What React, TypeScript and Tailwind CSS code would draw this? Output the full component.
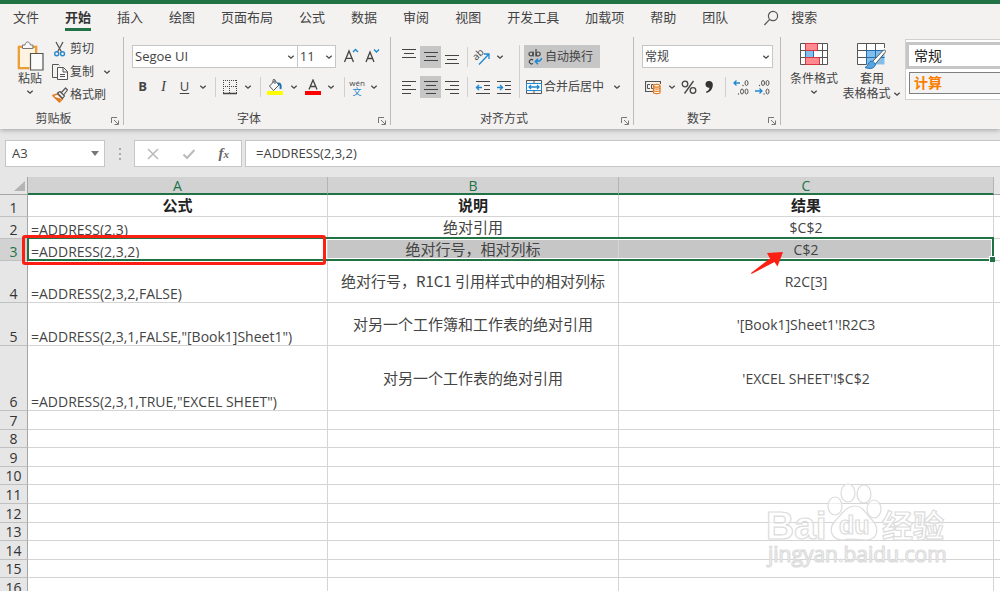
import type { ReactNode } from "react";
import clsx from "clsx";

const TABS = ["文件", "开始", "插入", "绘图", "页面布局", "公式", "数据", "审阅", "视图", "开发工具", "加载项", "帮助", "团队"];

type Row = { n: number; height: string; a?: string; b?: string; c?: string };

const ROWS: Row[] = [
  { n: 1, height: "h-[22px]", a: "公式", b: "说明", c: "结果" },
  { n: 2, height: "h-[22px]", a: "=ADDRESS(2,3)", b: "绝对引用", c: "$C$2" },
  { n: 3, height: "h-[22px]", a: "=ADDRESS(2,3,2)", b: "绝对行号，相对列标", c: "C$2" },
  { n: 4, height: "h-[42px]", a: "=ADDRESS(2,3,2,FALSE)", b: "绝对行号，R1C1 引用样式中的相对列标", c: "R2C[3]" },
  { n: 5, height: "h-[43px]", a: '=ADDRESS(2,3,1,FALSE,"[Book1]Sheet1")', b: "对另一个工作簿和工作表的绝对引用", c: "'[Book1]Sheet1'!R2C3" },
  { n: 6, height: "h-[65px]", a: '=ADDRESS(2,3,1,TRUE,"EXCEL SHEET")', b: "对另一个工作表的绝对引用", c: "'EXCEL SHEET'!$C$2" },
  { n: 7, height: "h-[19px]" },
  { n: 8, height: "h-[18px]" },
  { n: 9, height: "h-[19px]" },
  { n: 10, height: "h-[18px]" },
  { n: 11, height: "h-[19px]" },
  { n: 12, height: "h-[19px]" },
  { n: 13, height: "h-[18px]" },
  { n: 14, height: "h-[19px]" },
  { n: 15, height: "h-[18px]" },
  { n: 16, height: "h-[19px]" },
];

export default function App() {
  return (
    <div className="flex h-screen flex-col overflow-hidden bg-[#e6e6e6] font-['Open_Sans','Noto_Sans_CJK_SC',sans-serif] text-xs text-[#444]">
      <Ribbon />
      <FormulaBar />
      <Sheet />
    </div>
  );
}

function Ribbon() {
  return (
    <header className="shrink-0 border-t-4 border-[#217346] bg-[#f3f2f1] shadow-[0_1px_5px_rgba(0,0,0,0.3)]">
      <nav className="flex h-[33px] items-start text-[13px] whitespace-nowrap">
        {TABS.map((tab) => (
          <button key={tab} className="px-[13px]">
            <span
              className={clsx(
                "block h-[27px] border-b-[3px] pt-[3px] leading-5",
                tab === "开始" ? "border-[#217346] font-bold text-[#333]" : "border-transparent"
              )}
            >
              {tab}
            </span>
          </button>
        ))}
        <button className="flex h-[27px] items-center gap-3 pl-[22px]">
          <svg className="h-4 w-4" viewBox="0 0 16 16" fill="none" stroke="#555" strokeWidth="1.2">
            <circle cx="10" cy="6" r="4.6" />
            <path d="M6.7 9.4 1.4 15" />
          </svg>
          搜索
        </button>
      </nav>

      <div className="flex h-[92px] items-start">
        <ClipboardGroup />
        <FontGroup />
        <AlignGroup />
        <NumberGroup />
        <StylesGroup />
      </div>
    </header>
  );
}

function Group({ label, className, children }: { label: string; className: string; children: ReactNode }) {
  return (
    <section className={clsx("flex h-[88px] shrink-0 flex-col border-r border-[#bdbbb9]", className)}>
      <div className="flex-1">{children}</div>
      <div className="flex h-3 items-center leading-3">
        <span className="flex-1 text-center">{label}</span>
        <button aria-label={`${label}设置`} className="w-4 pl-1">
          <svg className="mt-1 h-2 w-2" viewBox="0 0 8 8" fill="none" stroke="#777">
            <path d="M.5 6V.5H6M3 3l4 4M7.5 3.5v4h-4" />
          </svg>
        </button>
      </div>
    </section>
  );
}

function Chevron() {
  return (
    <svg className="h-[10px] w-[10px] shrink-0" viewBox="0 0 10 10" fill="none" stroke="#444" strokeWidth="1.3">
      <path d="M2.3 3.8 5 6.2l2.7-2.4" />
    </svg>
  );
}

function Drop({ label }: { label: string }) {
  return (
    <button aria-label={label} className="flex h-[22px] w-[17px] items-center justify-center">
      <Chevron />
    </button>
  );
}

function Tool({ label, className, children }: { label: string; className?: string; children: ReactNode }) {
  return (
    <button aria-label={label} title={label} className={clsx("flex h-[22px] shrink-0 items-center justify-center", className)}>
      {children}
    </button>
  );
}

function Divider() {
  return (
    <span className="flex w-[9px] shrink-0 justify-center">
      <span className="h-5 w-px bg-[#d2d0ce]" />
    </span>
  );
}

function Dropdown({ label, value, className }: { label: string; value: string; className: string }) {
  return (
    <div className={clsx("grid h-[23px] items-center border border-[#c6c6c6] bg-white", className)}>
      <select aria-label={label} className="col-start-1 row-start-1 h-[21px] w-full appearance-none pl-[2px] outline-none">
        <option>{value}</option>
      </select>
      <span className="pointer-events-none col-start-1 row-start-1 mr-[1px] justify-self-end">
        <Chevron />
      </span>
    </div>
  );
}

function ClipboardGroup() {
  return (
    <Group label="剪贴板" className="w-[124px]">
      <div className="flex">
        <button className="flex w-[52px] flex-col items-center pt-1 pl-2">
          <svg className="h-[30px] w-7" viewBox="0 0 28 30" fill="none">
            <path d="M2 5h19v7h-2V7H4v19h9v2H2z" fill="#f0a63c" stroke="#e8912d" strokeWidth=".6" />
            <path d="M4 7h15v5h-5v14H4z" fill="#fdf3e0" />
            <path d="M6.5 7.5V4H9c.3-2 1.400-3 2.700-3s2.400 1 2.700 3h2.500v3.5z" fill="#fafafa" stroke="#777" />
            <path d="M14.5 12.5H27v16.5H14.5z" fill="#fafafa" stroke="#555" strokeWidth="1.2" />
          </svg>
          <span className="leading-4">粘贴</span>
          <Chevron />
        </button>
        <div className="flex flex-col">
          <button className="flex h-[23px] items-center gap-[2px]">
            <svg className="h-4 w-4" viewBox="0 0 16 16" fill="none">
              <path d="M4 1l5.5 10M11 1 5.5 11" stroke="#555" strokeWidth="1.3" />
              <circle cx="4.7" cy="12.700" r="2" stroke="#2b88c8" strokeWidth="1.4" />
              <circle cx="10.5" cy="12.700" r="2" stroke="#2b88c8" strokeWidth="1.4" />
            </svg>
            剪切
          </button>
          <div className="flex items-center gap-1">
            <button className="flex h-[23px] items-center gap-[2px]">
              <svg className="h-4 w-4" viewBox="0 0 16 16" fill="none" stroke="#555">
                <path d="M5 13.5H.5V.5h6l1 1" />
                <path d="M5.5 3.5h6l4 4v8h-10zM11 3.5v4.5h4.5M8 10.5h5M8 12.5h5" fill="#fafafa" />
              </svg>
              复制
            </button>
            <Drop label="复制选项" />
          </div>
          <button className="flex h-[23px] items-center gap-[2px]">
            <svg className="h-4 w-4" viewBox="0 0 16 16" fill="none" strokeLinejoin="round">
              <path d="M.8 8.5 5.5 7l5 5-3 3z" fill="#fff" stroke="#e07b1f" strokeWidth="1.4" />
              <path d="M3 10.500 8.500 12 7 14.500z" fill="#e07b1f" stroke="#e07b1f" />
              <path d="M5.500 6 8 4.500 12.500 9 10.500 11.500zM9.500 5.500 13.500 1l2 2L12 7.500" fill="#f5f5f5" stroke="#555" strokeWidth="1.2" />
            </svg>
            格式刷
          </button>
        </div>
      </div>
    </Group>
  );
}

function FontGroup() {
  return (
    <Group label="字体" className="w-[267px]">
      <div className="flex flex-col gap-2 px-2 pt-2">
        <div className="flex">
          <Dropdown label="字体" value="Segoe UI" className="w-[169px] text-[13px]" />
          <Dropdown label="字号" value="11" className="w-[39px] border-l-0 text-[13px]" />
          <Tool label="增大字号" className="ml-1 w-[21px]">
            <svg className="h-4 w-4" viewBox="0 0 16 16" fill="none">
              <path d="M1.500 14 6 3l4.5 11M3 10.300h6" stroke="#444" strokeWidth="1.3" />
              <path d="M10 4l2.5-2.500L15 4" stroke="#1e88d0" strokeWidth="1.4" />
            </svg>
          </Tool>
          <Tool label="减小字号" className="w-[21px]">
            <svg className="h-4 w-4" viewBox="0 0 16 16" fill="none">
              <path d="M2 14 6 4l4 10M3.5 10.5h5" stroke="#444" strokeWidth="1.3" />
              <path d="M10 1.5 12.5 4 15 1.5" stroke="#1e88d0" strokeWidth="1.4" />
            </svg>
          </Tool>
        </div>
        <div className="flex items-center">
          <Tool label="加粗" className="w-[21px] text-[13px] font-bold">B</Tool>
          <Tool label="倾斜" className="w-[21px] font-['Liberation_Serif',serif] text-[15px] italic">I</Tool>
          <Tool label="下划线" className="w-[21px] text-[13px] underline underline-offset-2">U</Tool>
          <Drop label="下划线选项" />
          <Divider />
          <Tool label="边框" className="w-[19px]">
            <svg className="h-4 w-4" viewBox="0 0 16 16" fill="none" stroke="#444">
              <path d="M1 1.500h14M1 7.500h14M1.500 1v13M7.500 1v13M14.500 1v13" strokeDasharray="1 1" />
              <path d="M1 14.500h14" strokeWidth="1.5" />
            </svg>
          </Tool>
          <Drop label="边框选项" />
          <Divider />
          <Tool label="填充颜色" className="w-[21px]">
            <svg className="h-4 w-4" viewBox="0 0 16 16" fill="none">
              <path d="M2.5 7 8 1.5l4 4.5-5.5 5.5zM6 4V1.200C6 0 8 0 8 1.200V5" fill="#fafafa" stroke="#555" />
              <path d="M10.5 4.5C13 4 14.200 5.5 13.5 10" stroke="#1c6fb0" strokeWidth="2" />
              <path d="M0 12h16v4H0z" fill="#ff0" />
            </svg>
          </Tool>
          <Drop label="填充颜色选项" />
          <Tool label="字体颜色" className="w-[21px]">
            <svg className="h-4 w-4" viewBox="0 0 16 16" fill="none">
              <path d="M4 10.5 8 1l4 9.5M5.5 7.5h5" stroke="#444" strokeWidth="1.3" />
              <path d="M0 12h16v4H0z" fill="red" />
            </svg>
          </Tool>
          <Drop label="字体颜色选项" />
          <Divider />
          <Tool label="拼音" className="w-[17px] flex-col">
            <span className="text-[8px] leading-[8px]">wén</span>
            <span className="text-[9px] leading-[9px] text-[#1e88d0]">文</span>
          </Tool>
          <Drop label="拼音选项" />
        </div>
      </div>
    </Group>
  );
}

function Lines({ d }: { d: string }) {
  return (
    <svg className="h-4 w-4" viewBox="0 0 16 16" fill="none" stroke="#444" strokeWidth="1.2">
      <path d={d} />
    </svg>
  );
}

function AlignGroup() {
  return (
    <Group label="对齐方式" className="w-[243px]">
      <div className="flex px-[7px] pt-2">
        <div className="flex w-[117px] flex-col gap-2">
          <div className="flex h-[23px] items-center">
            <Tool label="顶端对齐" className="w-[22px]"><Lines d="M1 .5h14M3 4.500h10M1 8.500h14" /></Tool>
            <Tool label="垂直居中" className="w-[21px] bg-[#c6c6c6]"><Lines d="M1 3.500h14M3 7.500h10M1 11.500h14" /></Tool>
            <Tool label="底端对齐" className="w-[22px]"><Lines d="M1 6.500h14M3 10.500h10M1 14.500h14" /></Tool>
            <Divider />
            <Tool label="方向" className="w-[19px]">
              <svg className="h-[18px] w-[18px]" viewBox="0 0 18 18" fill="none" overflow="visible">
                <text x="0" y="11" fontSize="10" fill="#444" transform="rotate(-45 4 8)">ab</text>
                <path d="M6 16.500 15.500 6.500M11 6h5v5" stroke="#1e88d0" strokeWidth="1.3" />
              </svg>
            </Tool>
            <Drop label="方向选项" />
          </div>
          <div className="flex items-center">
            <Tool label="左对齐" className="w-[22px]"><Lines d="M1 2.500h14M1 6.500h9M1 10.500h14M1 14.500h9" /></Tool>
            <Tool label="居中" className="w-[21px] bg-[#c6c6c6]"><Lines d="M1 2.500h14M3 6.500h10M1 10.500h14M3 14.500h10" /></Tool>
            <Tool label="右对齐" className="w-[22px]"><Lines d="M1 2.500h14M6 6.500h9M1 10.500h14M6 14.500h9" /></Tool>
            <Divider />
            <Tool label="减少缩进量" className="w-[21px]">
              <svg className="h-4 w-4" viewBox="0 0 16 16" fill="none" stroke="#444" strokeWidth="1.2">
                <path d="M1 2.500h14M9 6.500h6M9 10.500h6M1 14.500h14" />
                <path d="M7 8.500H1.500M4 6 1.500 8.500 4 11" stroke="#1e88d0" strokeWidth="1.4" />
              </svg>
            </Tool>
            <Tool label="增加缩进量" className="w-[21px]">
              <svg className="h-4 w-4" viewBox="0 0 16 16" fill="none" stroke="#444" strokeWidth="1.2">
                <path d="M1 2.500h14M9 6.500h6M9 10.500h6M1 14.500h14" />
                <path d="M1 8.500h5.500M4 6l2.500 2.500L4 11" stroke="#1e88d0" strokeWidth="1.4" />
              </svg>
            </Tool>
          </div>
        </div>
        <span className="mx-1 w-px bg-[#d2d0ce]" />
        <div className="flex flex-col items-start gap-2">
          <button className="flex h-[23px] items-center gap-[2px] bg-[#c6c6c6] pr-[7px] pl-[3px]">
            <svg className="h-4 w-4" viewBox="0 0 16 16" fill="none" stroke="#444" strokeWidth="1.2">
              {/* "ab" over "c" with the wrap arrow */}
              <circle cx="4" cy="5" r="2" />
              <path d="M6.200 2.500v5M9 0v7.500" />
              <circle cx="11.200" cy="5" r="2" />
              <path d="M6 11a2.200 2.200 0 1 0 0 3.400" />
              <path d="M14.500 9c0 2.500-2 3.500-6 3.500M11 9.800 8.300 12.500l2.700 2.700" stroke="#1e88d0" strokeWidth="1.5" />
            </svg>
            自动换行
          </button>
          <div className="flex items-center gap-1">
            <button className="flex h-[22px] items-center gap-[2px] pl-[2px]">
              <svg className="h-4 w-4" viewBox="0 0 16 16" fill="none">
                <path d="M.5 1.500h15v13H.5zM8 1.500v3M8 11.500v3" stroke="#555" />
                <path d="M.5 4.500h15v7H.5z" fill="#fff" stroke="#1e88d0" />
                <path d="M3 8h10M5 6 3 8l2 2M11 6l2 2-2 2" stroke="#1e88d0" strokeWidth="1.3" />
              </svg>
              合并后居中
            </button>
            <Drop label="合并选项" />
          </div>
        </div>
      </div>
    </Group>
  );
}

// small "0" digits and dots used by the two decimal buttons
function Decimals({ digits, dots, arrow }: { digits: number[][]; dots: number[][]; arrow: string }) {
  return (
    <svg className="h-4 w-4" viewBox="0 0 16 16" fill="none">
      {digits.map(([x, y]) => (
        <ellipse key={`${x}-${y}`} cx={x} cy={y} rx="1.500" ry="2.500" stroke="#555" />
      ))}
      {dots.map(([x, y]) => (
        <circle key={`${x}-${y}`} cx={x} cy={y} r=".7" fill="#555" />
      ))}
      <path d={arrow} stroke="#1e88d0" strokeWidth="1.3" />
    </svg>
  );
}

function NumberGroup() {
  return (
    <Group label="数字" className="w-[147px]">
      <div className="flex flex-col gap-2 px-2 pt-2">
        <Dropdown label="数字格式" value="常规" className="w-[131px]" />
        <div className="flex items-center">
          <Tool label="会计数字格式" className="w-[22px]">
            <svg className="h-4 w-4" viewBox="0 0 16 16" fill="none">
              <path d="M8 12.500H.5v-10h15V5" stroke="#555" strokeWidth="1.2" />
              <path d="M5 5.500H2.500v4H5M8.500 5.500h-2v4h2" stroke="#555" />
              <path d="M8.500 7v6.500c0 1.500 6.500 1.500 6.500 0V7" fill="#fff" stroke="#e07b1f" strokeWidth="1.2" />
              <ellipse cx="11.700" cy="6.700" rx="3.300" ry="1.400" fill="#fff" stroke="#e07b1f" strokeWidth="1.2" />
              <path d="M8.500 9c0 1.500 6.500 1.500 6.500 0M8.500 11.300c0 1.500 6.500 1.500 6.500 0" stroke="#e07b1f" strokeWidth="1.2" />
            </svg>
          </Tool>
          <Drop label="会计格式选项" />
          <Tool label="百分比样式" className="w-[17px]">
            <svg className="h-4 w-4" viewBox="0 0 16 16" fill="none" stroke="#444" strokeWidth="1.3">
              <circle cx="4" cy="5" r="2.800" />
              <circle cx="12" cy="11.500" r="2.800" />
              <path d="M12.500 2 3.500 14.500" />
            </svg>
          </Tool>
          <Tool label="千位分隔样式" className="w-[24px]">
            <svg className="h-4 w-4" viewBox="0 0 16 16" fill="#333">
              <path d="M8 2a3.500 3.500 0 0 1 3.800 3.800c0 4-2.300 7-6.300 8.200l-.5-1.200c2-.8 3.300-2 3.500-4A3.400 3.400 0 0 1 4.500 5.500 3.400 3.400 0 0 1 8 2z" />
            </svg>
          </Tool>
          <Divider />
          <Tool label="增加小数位数" className="w-[21px]">
            <Decimals
              digits={[[13.5, 4], [9, 12.5], [13.5, 12.5]]}
              dots={[[10, 6.5], [5.5, 15]]}
              arrow="M7 4H1M3.500 1.500 1 4l2.500 2.500"
            />
          </Tool>
          <Tool label="减少小数位数" className="w-[21px]">
            <Decimals
              digits={[[9, 4], [13.5, 4], [13.5, 12.5]]}
              dots={[[5.5, 6.5], [10, 15]]}
              arrow="M1 12h7M5.500 9.500 8 12l-2.500 2.500"
            />
          </Tool>
        </div>
      </div>
    </Group>
  );
}

function StylesGroup() {
  return (
    <section className="flex min-w-0 flex-1 items-start">
      <button className="flex w-[62px] shrink-0 flex-col items-center pt-[5px] pl-1">
        <svg className="mb-[5px] h-6 w-7" viewBox="0 0 28 24" fill="none">
          <path d="M.5 1.500h27v21H.5z" fill="#fff" />
          <path d="M5.500 1.500h12v7h-12zM5.500 15.500h14v7h-14z" fill="#ff8a8f" />
          <path d="M5.500 8.500h8v7h-8z" fill="#83bdea" />
          <path d="M.5 1.500h27v21H.5zM.5 8.500h27M.5 15.500h27M22.500 1.500v21" stroke="#555" />
          <path d="M5.500 8.500v7h8v-7z" stroke="#1e70b8" />
          <path d="M5.500 8.500v-7h12v7zM5.500 22.500v-7h14v7z" stroke="#d9363e" />
        </svg>
        <span className="leading-4 whitespace-nowrap">条件格式</span>
        <Chevron />
      </button>
      <button className="flex w-[62px] shrink-0 flex-col items-center pt-[5px] pr-[4px]">
        <svg className="mb-[5px] h-6 w-8" viewBox="0 0 32 24" fill="none" overflow="visible">
          <path d="M1.500 1.500h27v21h-27z" fill="#fff" />
          <path d="M10.500 8.500h18v14h-18z" fill="#83bdea" />
          <path d="M10.500 8.500h18M10.500 15.500h18M10.500 8.500v14M19.500 8.500v14" stroke="#1e70b8" />
          <path d="M28.500 6V1.500h-27v21h9M1.500 8.500h9M1.500 15.500h9M10.500 1.500v7M19.500 1.500v7" stroke="#555" />
          <path d="M16 20 27 8.500c1.500-1 3.500 0 2 2L19 22.500z" fill="#fafafa" stroke="#555" />
          <path d="M16.500 19c-5 0-3.500 5-7.500 6.500 5 2 10 1 10.500-3.500z" fill="#5ba4dc" stroke="#1e70b8" />
        </svg>
        <span className="leading-4">套用</span>
        <span className="flex items-center gap-[1px] leading-[14px] whitespace-nowrap">
          表格格式
          <Chevron />
        </span>
      </button>
      <div className="mt-[2px] flex h-[61px] min-w-0 flex-1 flex-col gap-[3px] border border-r-0 border-[#d2d0ce] bg-white pt-[2px] text-sm">
        <button className="h-[27px] border-[3px] border-r-0 border-[#c6c6c6] bg-white pl-[5px] text-left leading-5 text-[#222]">
          常规
        </button>
        <button className="ml-[3px] h-[22px] border border-r-0 border-[#7f7f7f] bg-[#f2f2f2] pl-1 text-left leading-[18px] font-bold text-[#fa7d00]">
          计算
        </button>
      </div>
    </section>
  );
}

function FormulaBar() {
  return (
    <div className="mt-[11px] mb-[10px] flex h-[27px] shrink-0 pl-[5px] text-[13px]">
      <div className="flex w-[100px] items-center border border-[#c6c6c6] bg-white pr-1 pl-[6px]">
        <input aria-label="名称框" defaultValue="A3" className="min-w-0 flex-1 outline-none" />
        <button aria-label="名称列表" className="px-[1px]">
          <svg className="h-[5px] w-2" viewBox="0 0 8 5" fill="#777">
            <path d="M0 0h8L4 5z" />
          </svg>
        </button>
      </div>
      <span className="flex w-[29px] flex-col items-center justify-center gap-[3px]">
        <i className="h-[2px] w-[2px] bg-[#aaa]" />
        <i className="h-[2px] w-[2px] bg-[#aaa]" />
        <i className="h-[2px] w-[2px] bg-[#aaa]" />
      </span>
      <div className="flex w-[108px] items-center justify-around border border-[#c6c6c6] bg-white">
        <button aria-label="取消">
          <svg className="h-3 w-3" viewBox="0 0 12 12" stroke="#bbb" strokeWidth="1.6">
            <path d="M1 1l10 10M11 1 1 11" />
          </svg>
        </button>
        <button aria-label="输入">
          <svg className="h-3 w-3" viewBox="0 0 12 12" fill="none" stroke="#bbb" strokeWidth="2.2">
            <path d="M.5 6.500 4 10l7.500-8" />
          </svg>
        </button>
        <button aria-label="插入函数" className="font-['Liberation_Serif',serif] text-[15px] leading-4 font-bold text-[#666] italic">
          f<span className="text-[11px]">x</span>
        </button>
      </div>
      <input
        aria-label="编辑栏"
        defaultValue="=ADDRESS(2,3,2)"
        className="ml-[3px] min-w-0 flex-1 border border-r-0 border-[#c6c6c6] bg-white pl-[10px] outline-none"
      />
    </div>
  );
}

function Sheet() {
  return (
    <main className="relative min-h-0 flex-1 overflow-hidden">
      <table className="w-full table-fixed border-separate border-spacing-0 bg-white text-sm leading-[17px] whitespace-nowrap text-[#444]">
        <colgroup>
          <col className="w-[28px]" />
          <col className="w-[300px]" />
          <col className="w-[291px]" />
          <col className="w-[375px]" />
          <col />
        </colgroup>
        <thead>
          <tr className="h-[18px] leading-4 text-[#217346]">
            <th className="border-r border-b border-[#a6a6a6] bg-[#e6e6e6] p-0">
              <svg className="ml-auto h-[14px] w-[14px]" viewBox="0 0 14 14" fill="#b4b4b4">
                <path d="M12 2v10H1z" />
              </svg>
            </th>
            {["A", "B", "C"].map((col) => (
              <th
                key={col}
                className="border-r border-b-2 border-r-[#b4b4b4] border-b-[#217346] bg-[#d2d2d2] p-0 pt-[2px] leading-[14px] font-normal"
              >
                {col}
              </th>
            ))}
            <th className="border-b border-[#a6a6a6] bg-[#e6e6e6] p-0" />
          </tr>
        </thead>
        <tbody>
          {ROWS.map((row) => (
            <SheetRow key={row.n} row={row} />
          ))}
        </tbody>
      </table>

      {/* Selected range A3:C3 */}
      <div className="pointer-events-none absolute top-[60px] left-[27px] h-[24px] w-[967px] border-2 border-[#217346] inset-shadow-[0_0_0_1px_#fff]">
        <span className="absolute -right-[3px] -bottom-[3px] h-[6px] w-[6px] border-t border-l border-white bg-[#217346]" />
      </div>
      {/* Highlight around A3 */}
      <div className="pointer-events-none absolute top-[58px] left-[22px] h-[30px] w-[304px] rounded-[3px] border-[3px] border-[#fb2013]" />
      <svg className="pointer-events-none absolute top-[72px] left-[750px] h-[26px] w-[36px]" viewBox="0 0 36 26" fill="#fb2013">
        <path d="M1 24 20 9.500 17 4l16-1-5.500 14.500L24.500 13 1.500 25z" />
      </svg>
      <Watermark />
    </main>
  );
}

function SheetRow({ row }: { row: Row }) {
  const heading = row.n === 1;
  const selected = row.n === 3;
  const cell = "border-r border-b border-[#d4d4d4] p-0";

  return (
    <tr className={row.height}>
      <th
        className={clsx(
          "border-r border-b border-r-[#a6a6a6] border-b-[#c0c0c0] p-0 align-bottom font-normal",
          selected ? "bg-[#d2d2d2] text-[#217346]" : "bg-[#e6e6e6] text-[#333]"
        )}
      >
        {row.n}
      </th>
      <td className={clsx(cell, heading ? "text-center text-[15px] font-bold text-[#222]" : "pl-[3px] align-bottom")}>{row.a}</td>
      <td
        className={clsx(
          cell,
          "pb-[2px] text-center font-['Noto_Sans_CJK_SC',sans-serif] text-[15px]",
          heading && "font-bold text-[#222]",
          selected && "bg-[#c6c6c6]"
        )}
      >
        {row.b}
      </td>
      <td className={clsx(cell, "text-center", heading && "text-[15px] font-bold text-[#222]", selected && "bg-[#c6c6c6]")}>{row.c}</td>
      <td className="border-b border-[#d4d4d4] p-0" />
    </tr>
  );
}

function Watermark() {
  return (
    <svg
      className="pointer-events-none absolute right-[50px] bottom-[17px] h-[92px] w-[186px]"
      viewBox="0 0 186 92"
      fill="#fff"
      fillOpacity=".6"
      stroke="#dcdcdc"
      strokeWidth="1.2"
      fontWeight="bold"
    >
      <ellipse cx="71" cy="24" rx="7" ry="9" />
      <ellipse cx="84" cy="11" rx="7" ry="9" />
      <ellipse cx="100" cy="12" rx="7" ry="9" />
      <ellipse cx="110" cy="27" rx="7" ry="9" />
      <path d="M91 24c8 0 11 8 17 14 7 7 7 19-5 20-8 0-16-2-24 0-12 0-15-11-8-19 7-7 11-15 20-15z" />
      <text x="2" y="57" fontSize="39" fontFamily="Liberation Sans">Bai</text>
      <text x="75" y="52" fontSize="25" fontFamily="Liberation Sans">du</text>
      <text x="118" y="55" fontSize="31" fontFamily="Noto Sans CJK SC">经验</text>
      <text x="4" y="80" fontSize="21" fontWeight="normal" fontFamily="Open Sans">jingyan.baidu.com</text>
    </svg>
  );
}
